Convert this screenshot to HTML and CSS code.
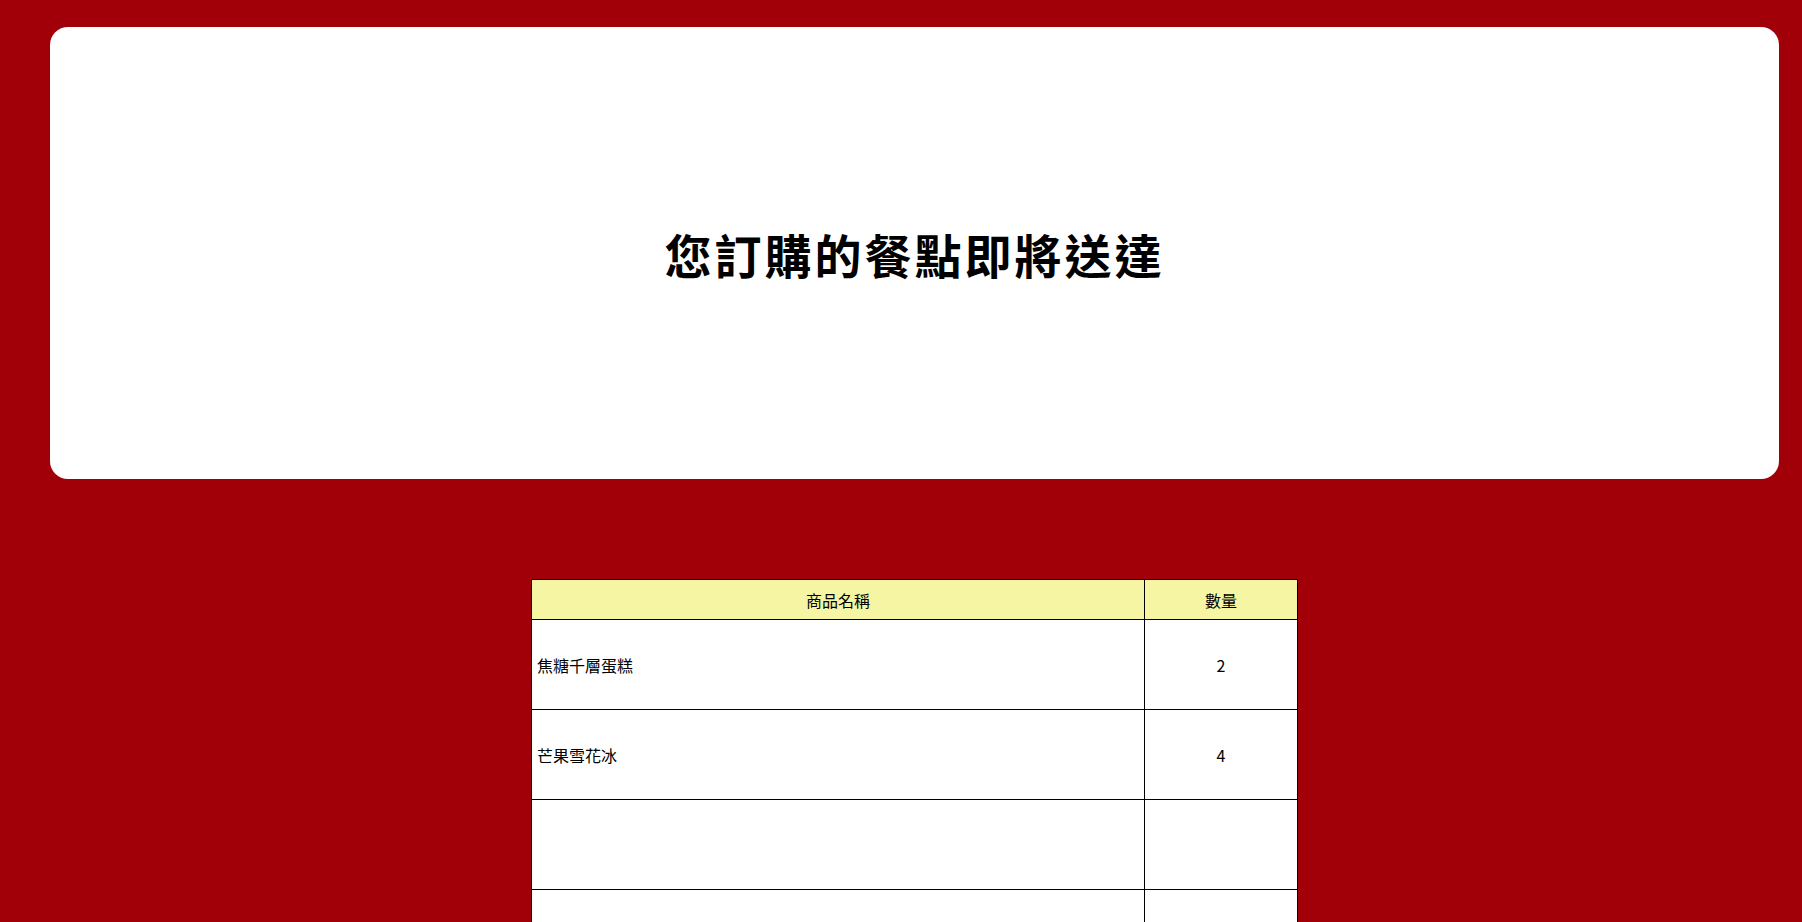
FILE: index.html
```html
<!DOCTYPE html>
<html lang="zh-Hant">
<head>
<meta charset="utf-8">
<title>訂單</title>
<link rel="stylesheet" href="styles.css">
</head>
<body>
<div class="page">
  <section class="banner">
    <h1 class="banner-title">您訂購的餐點即將送達</h1>
  </section>
  <table class="order-table">
    <thead>
      <tr>
        <th class="col-name">商品名稱</th>
        <th class="col-qty">數量</th>
      </tr>
    </thead>
    <tbody>
      <tr><td class="cell-name">焦糖千層蛋糕</td><td class="cell-qty">2</td></tr>
      <tr><td class="cell-name">芒果雪花冰</td><td class="cell-qty">4</td></tr>
      <tr><td class="cell-name"></td><td class="cell-qty"></td></tr>
      <tr><td class="cell-name"></td><td class="cell-qty"></td></tr>
    </tbody>
  </table>
</div>
</body>
</html>
```
FILE: styles.css
```css
html, body {
  margin: 0;
  padding: 0;
  background: #a10008;
}
body {
  font-family: "Noto Sans CJK TC", "Noto Sans", sans-serif;
  color: #000;
}
.page {
  padding: 27px 23px 40px 50px;
}
.banner {
  background: #fff;
  border-radius: 18px;
  height: 452px;
  display: flex;
  align-items: center;
  justify-content: center;
}
.banner-title {
  margin: 0;
  font-size: 47px;
  font-weight: 700;
  letter-spacing: 3px;
  line-height: 1;
}
.order-table {
  margin: 100px auto 0;
  width: 767px;
  border-collapse: collapse;
  background: #fff;
  font-size: 16px;
}
.order-table th,
.order-table td {
  border: 1px solid #000;
  padding: 0 5px;
}
.order-table th {
  background: #f5f5a4;
  font-weight: 400;
  height: 39px;
  text-align: center;
}
.col-name { width: 80%; }
.col-qty { width: 20%; }
.order-table td {
  height: 89px;
}
.cell-name { text-align: left; }
.cell-qty { text-align: center; }
```
